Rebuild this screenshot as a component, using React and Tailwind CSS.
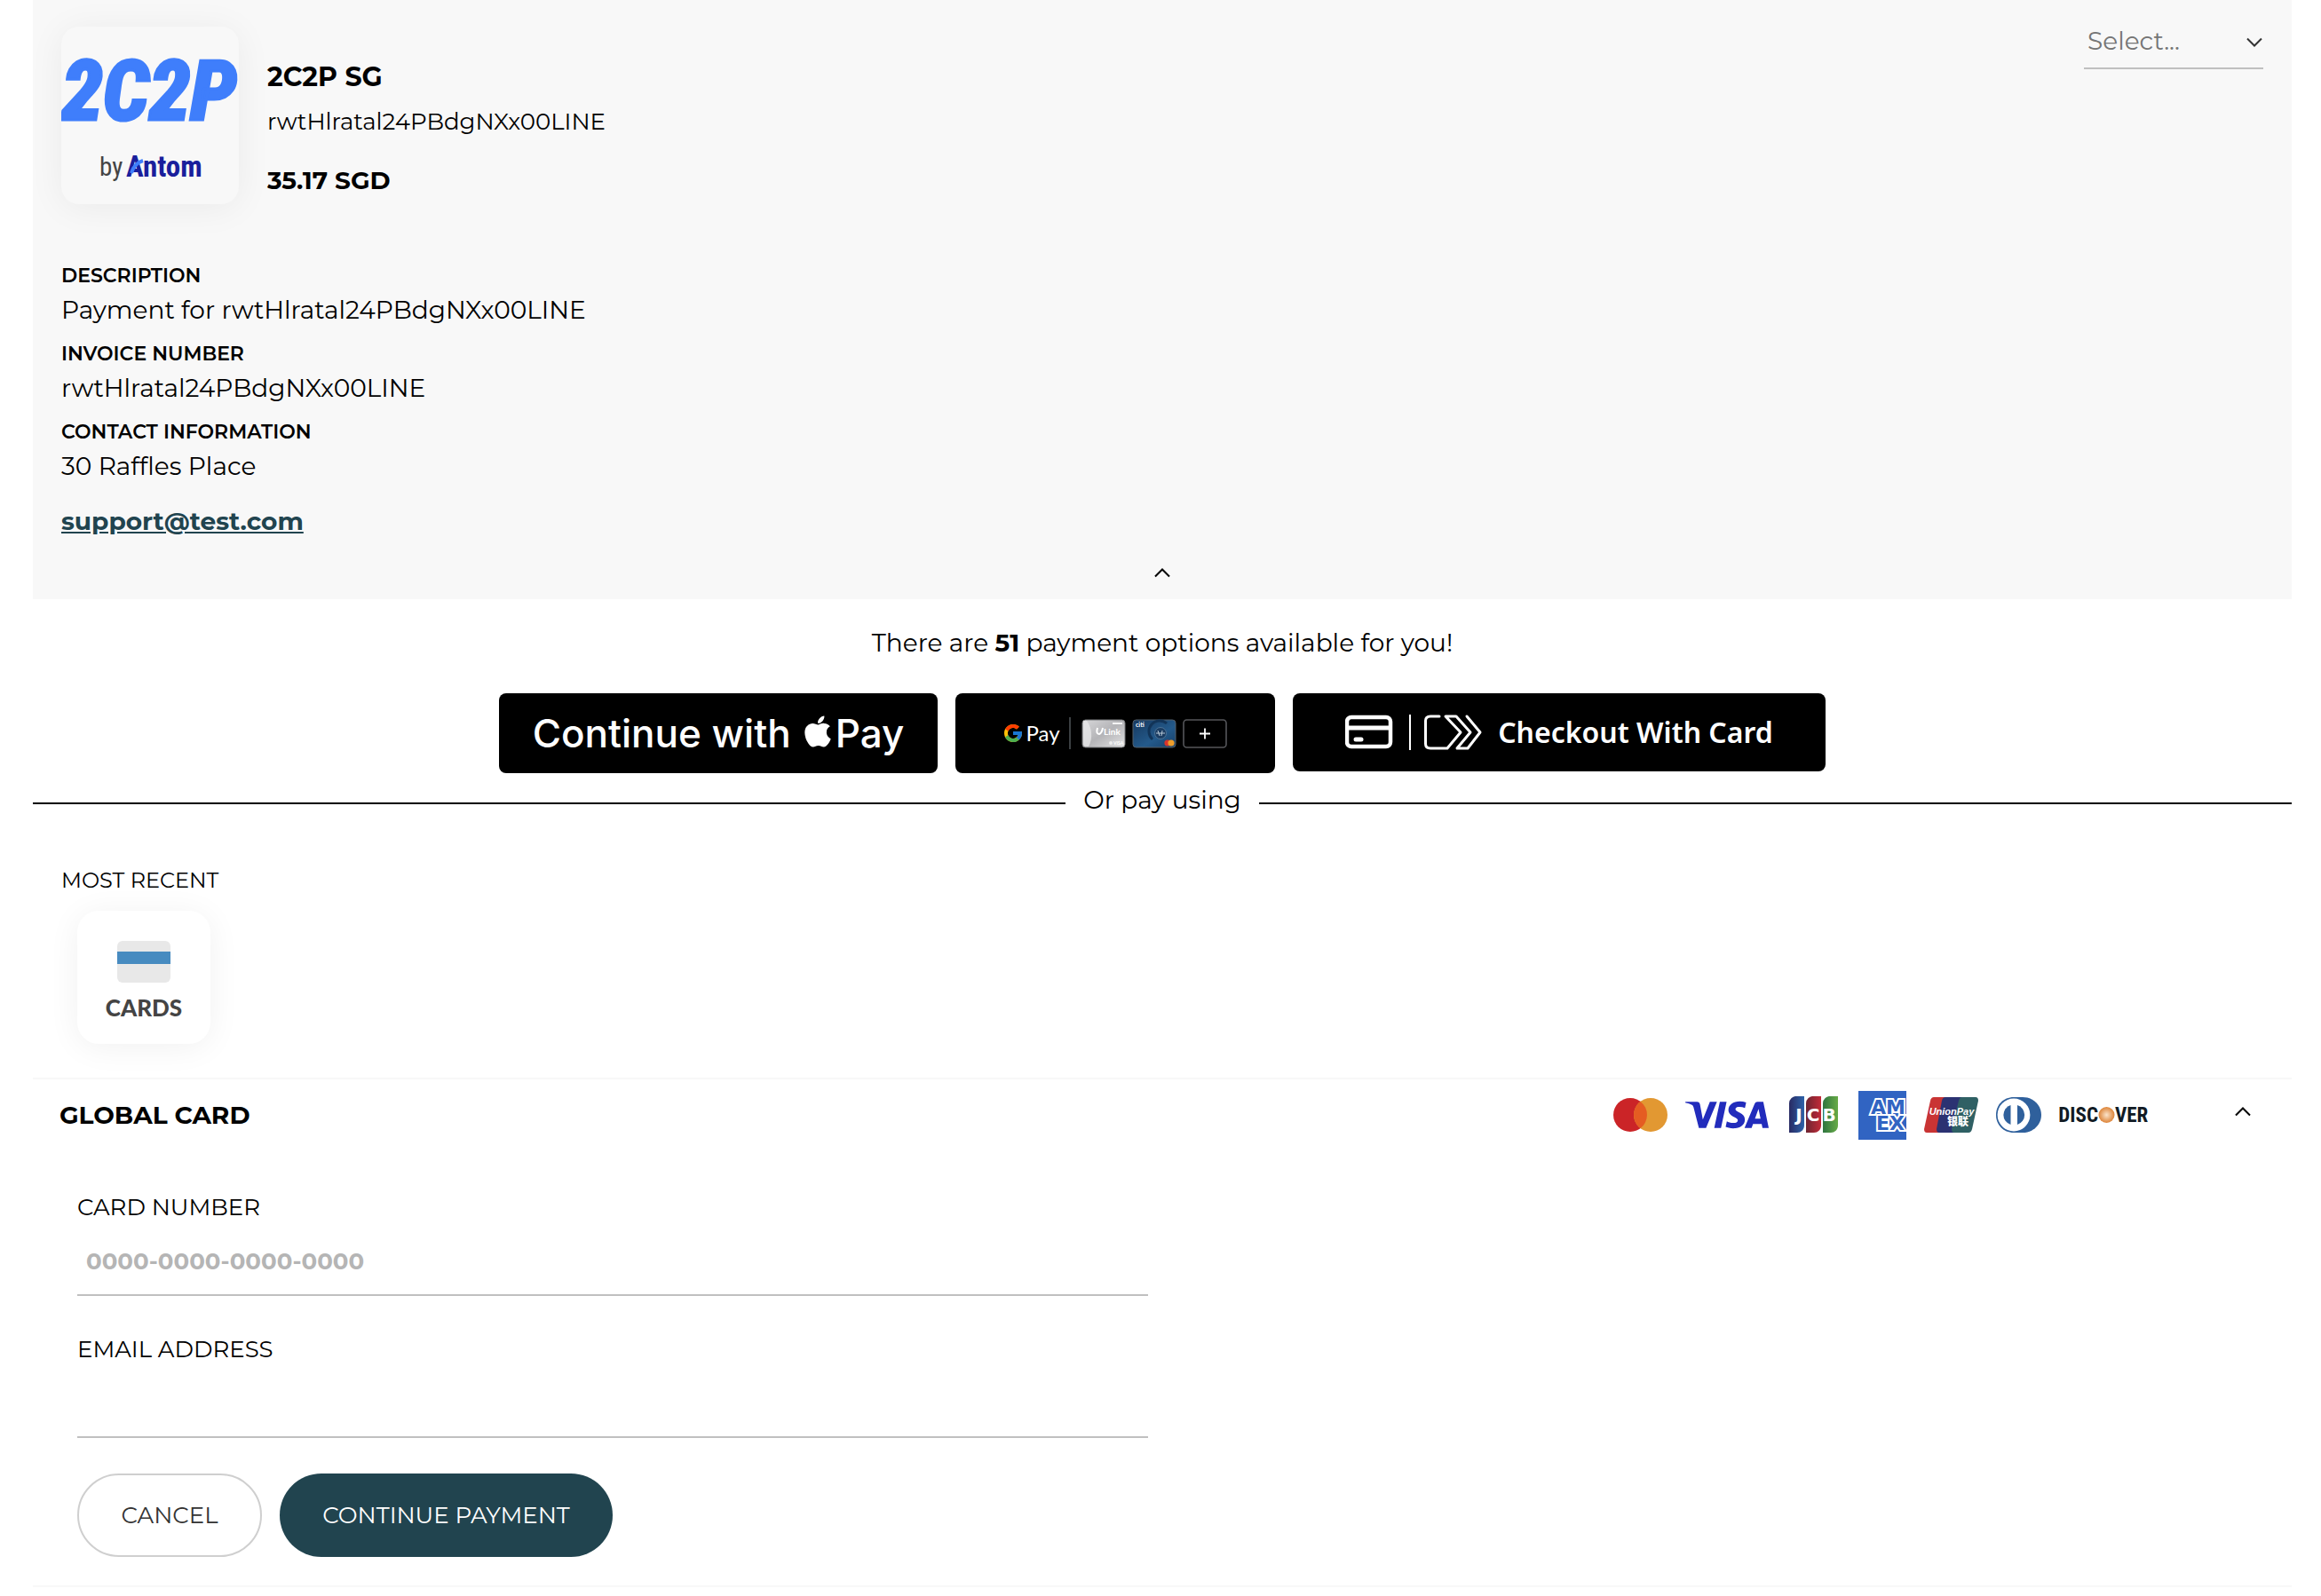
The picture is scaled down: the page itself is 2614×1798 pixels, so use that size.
import React, { useState } from 'react';
import { FaApple } from 'react-icons/fa';
import { FcGoogle } from 'react-icons/fc';
import { SiVisa } from 'react-icons/si';

const details = [
  { label: 'Description', value: 'Payment for rwtHlratal24PBdgNXx00LINE' },
  { label: 'Invoice number', value: 'rwtHlratal24PBdgNXx00LINE' },
  { label: 'Contact information', value: '30 Raffles Place' },
];

const Chevron = ({ down, className }) => (
  <svg className={className} width="20" height="12" viewBox="0 0 20 12" fill="none" stroke="currentColor" strokeWidth="2">
    <path d={down ? 'M2 1.5L10 9.5L18 1.5' : 'M2 10.5L10 2.5L18 10.5'} />
  </svg>
);

const MerchantLogo = () => (
  <svg className="w-full h-full" viewBox="0 0 200 200" role="img" aria-label="2C2P by Antom">
    <text x="99" y="105" textAnchor="middle" fontSize="94" fontWeight="800" fontStyle="italic" fontFamily="'Roboto Condensed', 'Liberation Sans', sans-serif" fill="#3f7efb" stroke="#3f7efb" strokeWidth="3">2C2P</text>
    <text x="43" y="168" fontSize="29" fontFamily="'Roboto Condensed', 'Liberation Sans', sans-serif" fill="#444444">by</text>
    <text x="73" y="169" fontSize="33" fontWeight="700" fontFamily="'Roboto Condensed', 'Liberation Sans', sans-serif" fill="#1a1f9c">Antom</text>
    <path d="M79 165C81 158 85 153 92 151" fill="none" stroke="#3f7efb" strokeWidth="4" />
  </svg>
);

const Mastercard = () => (
  <svg width="61" height="38" viewBox="0 0 61 38" role="img" aria-label="Mastercard">
    <circle cx="19" cy="19" r="19" fill="#cb2427" />
    <circle cx="42" cy="19" r="19" fill="#e29832" />
    <path d="M30.5 3.9a19 19 0 0 1 0 30.2a19 19 0 0 1 0-30.2z" fill="#e55c22" />
  </svg>
);

const Jcb = () => (
  <svg width="61" height="42" viewBox="0 0 61 42" role="img" aria-label="JCB">
    <defs>
      <linearGradient id="jcb-blue"><stop offset="0" stopColor="#292a63" /><stop offset="1" stopColor="#2d63a9" /></linearGradient>
      <linearGradient id="jcb-red"><stop offset="0" stopColor="#6d2531" /><stop offset="1" stopColor="#c22a38" /></linearGradient>
      <linearGradient id="jcb-green"><stop offset="0" stopColor="#2f7540" /><stop offset="1" stopColor="#68ab47" /></linearGradient>
    </defs>
    <path d="M12 0h8v33a8 8 0 0 1-8 8H3V8a8 8 0 0 1 9-8z" fill="url(#jcb-blue)" />
    <path d="M31 0h8v33a8 8 0 0 1-8 8h-9V8a8 8 0 0 1 9-8z" fill="url(#jcb-red)" />
    <path d="M50 0h8v33a8 8 0 0 1-8 8h-9V8a8 8 0 0 1 9-8z" fill="url(#jcb-green)" />
    <g textAnchor="middle" fontSize="20" fontWeight="700" fontFamily="'DejaVu Sans', sans-serif" fill="#ffffff">
      <text x="14" y="28">J</text>
      <text x="30" y="28">C</text>
      <text x="48" y="28">B</text>
    </g>
  </svg>
);

const Amex = () => (
  <svg width="54" height="55" viewBox="0 0 54 55" role="img" aria-label="American Express">
    <rect width="54" height="55" fill="#3164c2" />
    <g fontSize="22" fontWeight="700" fontFamily="'DejaVu Sans', sans-serif" fill="#3164c2" stroke="#ffffff" strokeWidth="4" paintOrder="stroke">
      <text x="14" y="26">AM</text>
      <text x="20" y="44">EX</text>
    </g>
  </svg>
);

const UnionPay = () => (
  <svg width="61" height="40" viewBox="0 0 61 40" role="img" aria-label="UnionPay">
    <path d="M11 0H26L18 40H3Q0 40 0 36L7 4Q8 0 11 0z" fill="#c93434" />
    <path d="M24 0H43L35 40H17Q14 40 14 36L20 4Q21 0 24 0z" fill="#2b3272" />
    <path d="M43 0H58Q61 0 61 4L54 36Q53 40 50 40H34Q31 40 31 36L39 4Q40 0 43 0z" fill="#2f6064" />
    <text x="31" y="20" textAnchor="middle" fontSize="11" fontWeight="700" fontStyle="italic" fontFamily="'Liberation Sans', sans-serif" fill="#ffffff">UnionPay</text>
    <text x="38" y="32" textAnchor="middle" fontSize="12" fontWeight="900" fontFamily="'Noto Sans CJK SC', sans-serif" fill="#ffffff">银联</text>
  </svg>
);

const Diners = () => (
  <svg width="51" height="40" viewBox="0 0 51 40" role="img" aria-label="Diners Club">
    <path d="M20 0H30C42 0 51 9 51 20S42 40 30 40H20C8 40 0 31 0 20S8 0 20 0z" fill="#2f609c" />
    <circle cx="20" cy="20" r="18.4" fill="#ffffff" />
    <path d="M16.5 9V31A11.5 11.5 0 0 1 16.5 9z" fill="#2f609c" />
    <path d="M24 9V31A11.5 11.5 0 0 0 24 9z" fill="#2f609c" />
  </svg>
);

const Discover = () => (
  <svg width="102" height="32" viewBox="0 0 102 32" role="img" aria-label="Discover">
    <defs>
      <radialGradient id="discover-o"><stop offset="0" stopColor="#fae3cb" /><stop offset="1" stopColor="#dd8438" /></radialGradient>
    </defs>
    <g fontSize="23" fontWeight="700" fontFamily="'Roboto Condensed', Lato, sans-serif" fill="#111b24">
      <text x="44" y="24" textAnchor="end">DISC</text>
      <text x="63" y="24">VER</text>
    </g>
    <circle cx="53.5" cy="16" r="9" fill="url(#discover-o)" />
  </svg>
);

const SavedCards = () => (
  <svg width="165" height="36" viewBox="0 0 165 36" aria-hidden="true">
    <defs>
      <linearGradient id="silver" x1="0" y1="0" x2="1" y2="1"><stop offset="0" stopColor="#d8d8da" /><stop offset=".5" stopColor="#b4b4b7" /><stop offset="1" stopColor="#e2e2e3" /></linearGradient>
      <linearGradient id="navy" x1="0" y1="0" x2="1" y2="1"><stop offset="0" stopColor="#16385e" /><stop offset=".6" stopColor="#245a8b" /><stop offset="1" stopColor="#173f67" /></linearGradient>
    </defs>
    <rect x="1" y="3" width="48" height="31" rx="3.5" fill="url(#silver)" stroke="#77787a" />
    <path d="M6 4C12 12 13 24 8 33H5Q2 33 2 30V4z" fill="#e6e6e7" opacity=".8" />
    <g fontFamily="Lato, sans-serif" fontWeight="700" fill="#ffffff">
      <text x="25" y="20" fontSize="10">Link</text>
      <text x="36" y="31" fontSize="5">VISA</text>
    </g>
    <path d="M18 12q-2 7 2 7q3-1 4-7" fill="none" stroke="#ffffff" strokeWidth="2" />
    <circle cx="33" cy="29" r="2" fill="#ededed" />
    <rect x="35" y="6" width="11" height="2" fill="#f4f4f4" />
    <rect x="58" y="3" width="48" height="31" rx="3.5" fill="url(#navy)" stroke="#55606b" />
    <text x="61" y="11" fontSize="7" fontWeight="700" fontFamily="Lato, sans-serif" fill="#ffffff">citi</text>
    <path d="M80 25A12 12 0 0 1 96 7" fill="none" stroke="#123458" strokeWidth="3" />
    <circle cx="89" cy="18" r="6.5" fill="#1b3d63" stroke="#4d7396" />
    <path d="M84 18h10M86 15l2 6M91 15l-1 6" stroke="#b8c8d6" />
    <circle cx="97" cy="29" r="3.6" fill="#d9342b" />
    <circle cx="101" cy="29" r="3.6" fill="#ee9d2b" />
    <rect x="115" y="3" width="48" height="31" rx="3.5" fill="#000000" stroke="#55565a" strokeWidth="1.6" />
    <path d="M139 12.5v12M133 18.5h12" stroke="#ffffff" strokeWidth="1.8" />
  </svg>
);

const ClickToPay = () => (
  <svg width="154" height="42" viewBox="0 0 154 42" fill="none" stroke="#ffffff" aria-hidden="true">
    <rect x="2" y="4" width="49" height="33" rx="5" strokeWidth="4.5" />
    <path d="M2 16h49" strokeWidth="5" />
    <path d="M12 29h6" strokeWidth="5" strokeLinecap="round" />
    <path d="M73 1v40" strokeWidth="2" />
    <path
      d="M106 3H96Q90.5 3 90.5 8V34Q90.5 39 96 39H115L130 21L113 3H125L141 21L126 39H138L152 21L137 3"
      strokeWidth="3"
      strokeLinejoin="round"
      strokeLinecap="round"
    />
  </svg>
);

const Field = ({ id, label, ...rest }) => (
  <div className="mb-10">
    <label htmlFor={id} className="block text-[26px] leading-10 uppercase">{label}</label>
    <input
      id={id}
      className="mt-1 block w-full h-[76px] px-2.5 text-[26px] font-bold border-b-2 border-[#c0c0c0] outline-none placeholder:text-[#b5b5b5]"
      {...rest}
    />
  </div>
);

const App = () => {
  const [showDetails, setShowDetails] = useState(true);
  const [showCard, setShowCard] = useState(true);

  return (
    <main className="ml-[37px] mr-[33px] bg-white text-black font-[Montserrat,Inter,sans-serif]">
      <header className="bg-[#f8f8f8] px-8 pt-[30px] pb-2.5">
        <div className="flex items-start">
          <div className="w-[200px] h-[200px] shrink-0 rounded-[20px] bg-[#f8f8f8] shadow-[0_4px_40px_rgba(0,0,0,0.06)]">
            <MerchantLogo />
          </div>
          <div className="ml-8 pt-8 leading-[50px]">
            <h1 className="text-[30px] font-bold">2C2P SG</h1>
            <p className="text-[26px]">rwtHlratal24PBdgNXx00LINE</p>
            <p className="mt-4 text-[28px] font-bold">35.17 SGD</p>
          </div>
          <div className="relative ml-auto -mt-3 w-[202px] text-[#757575]">
            <select aria-label="Language" className="block w-full h-[60px] pl-1 pb-0.5 text-[28px] appearance-none border-b-2 border-[#c0c0c0] outline-none">
              <option>Select...</option>
            </select>
            <Chevron down className="absolute right-0 top-6 text-[#333] pointer-events-none" />
          </div>
        </div>

        {showDetails && (
          <div className="mt-[63px]">
            <dl className="space-y-3">
              {details.map((item) => (
                <div key={item.label}>
                  <dt className="text-[22px] leading-9 font-semibold uppercase">{item.label}</dt>
                  <dd className="text-[28px] leading-10">{item.value}</dd>
                </div>
              ))}
            </dl>
            <a href="mailto:support@test.com" className="mt-[22px] inline-block text-[28px] leading-10 font-bold text-[#21444f] underline">
              support@test.com
            </a>
          </div>
        )}
        <button type="button" aria-label="Toggle details" onClick={() => setShowDetails(!showDetails)} className="mx-auto mt-[18px] flex h-10 w-14 items-center justify-center">
          <Chevron />
        </button>
      </header>

      <p className="mt-7 text-center text-[28px] leading-[42px]">
        There are <b>51</b> payment options available for you!
      </p>

      <div className="mt-9 flex flex-wrap items-start justify-center gap-5 text-white">
        <button type="button" className="flex h-[90px] w-[494px] items-center justify-center rounded-lg bg-black font-[Inter,sans-serif] text-[44px] font-medium">
          Continue with
          <FaApple className="ml-2.5 mb-1 h-10 w-10" />
          Pay
        </button>
        <button type="button" className="flex h-[90px] w-[360px] items-center justify-center rounded-lg bg-black text-2xl">
          <FcGoogle className="h-6 w-6" />
          <span className="ml-0.5 mr-2.5 font-[Lato,sans-serif]">Pay</span>
          <span className="mr-3 h-9 w-0.5 bg-[#3c4043]" />
          <SavedCards />
        </button>
        <button type="button" className="flex h-[88px] w-[600px] items-center justify-center gap-[18px] rounded-lg bg-black font-['Noto_Sans',sans-serif] text-[32px] font-semibold">
          <ClickToPay />
          Checkout With Card
        </button>
      </div>

      <div className="mt-2.5 flex items-center gap-5">
        <span className="mt-2 h-0.5 flex-1 bg-black" />
        <span className="text-[28px] leading-10">Or pay using</span>
        <span className="mt-2 h-0.5 flex-1 bg-black" />
      </div>

      <section className="mt-[53px] px-8">
        <h2 className="text-2xl leading-9 uppercase">Most recent</h2>
        <button type="button" className="ml-[18px] mt-4 mb-[38px] flex h-[150px] w-[150px] flex-col items-center justify-center gap-3 rounded-3xl bg-white pt-2 shadow-[0_4px_36px_rgba(0,0,0,0.06)]">
          <svg width="60" height="47" viewBox="0 0 60 47" aria-hidden="true">
            <rect width="60" height="47" rx="6" fill="#e8e8e8" />
            <rect y="12" width="60" height="14" fill="#478bc0" />
          </svg>
          <span className="font-[Lato,sans-serif] text-[26px] leading-8 font-black text-[#444]">CARDS</span>
        </button>
      </section>

      <section className="border-y-2 border-[#f8f8f8]">
        <div className="flex h-20 items-center px-[30px]">
          <h2 className="text-[28px] font-bold uppercase">Global card</h2>
          <div className="ml-auto flex items-center gap-5">
            <Mastercard />
            <SiVisa className="h-[94px] w-[94px] -my-8 text-[#222cbc]" />
            <Jcb />
            <Amex />
            <UnionPay />
            <Diners />
            <Discover />
          </div>
          <button type="button" aria-label="Toggle global card" onClick={() => setShowCard(!showCard)} className="ml-20 mb-2 flex h-10 w-[50px] items-center justify-center">
            <Chevron />
          </button>
        </div>
        {showCard && (
          <form className="px-[50px] pt-11 pb-8" onSubmit={(e) => e.preventDefault()}>
            <div className="w-1/2 pr-4">
              <Field id="card-number" label="Card number" placeholder="0000-0000-0000-0000" inputMode="numeric" />
              <Field id="email" label="Email address" type="email" />
            </div>
            <div className="flex gap-5 text-[26px]">
              <button type="button" className="h-[94px] w-[208px] rounded-full border-2 border-[#cfcfcf] text-[#333]">CANCEL</button>
              <button type="submit" className="h-[94px] w-[375px] rounded-full bg-[#21444f] text-white">CONTINUE PAYMENT</button>
            </div>
          </form>
        )}
      </section>
    </main>
  );
};

export default App;
